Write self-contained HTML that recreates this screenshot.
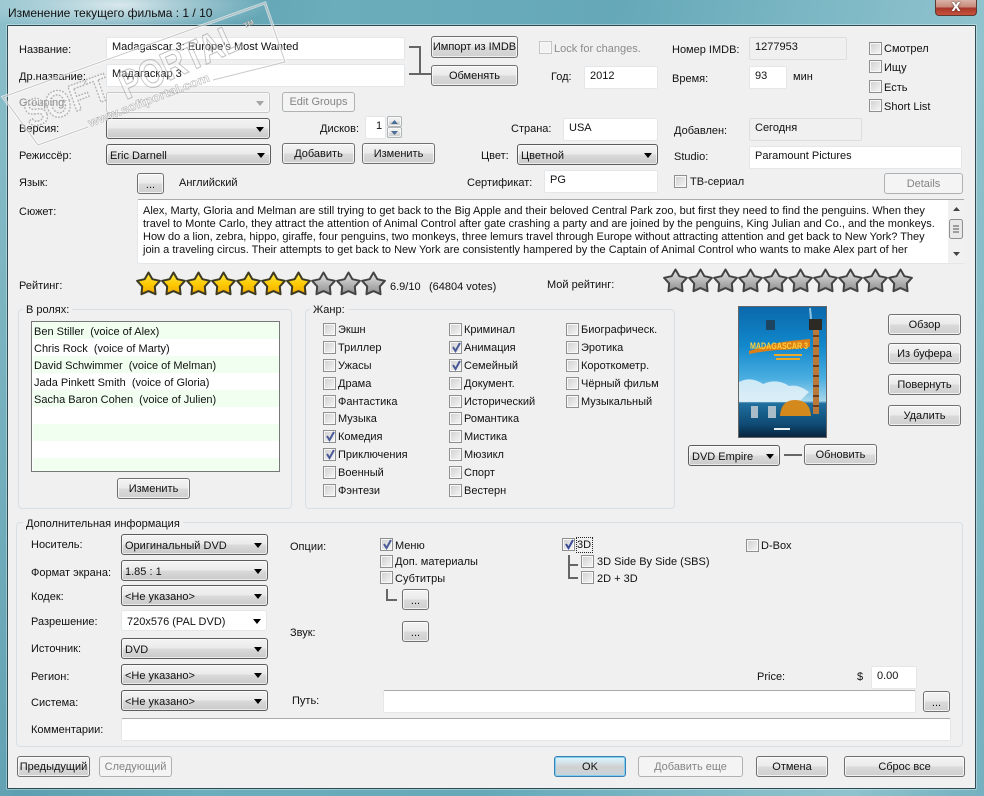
<!DOCTYPE html>
<html lang="ru"><head><meta charset="utf-8"><title>Изменение текущего фильма</title>
<style>
html,body{margin:0;padding:0;width:984px;height:796px;overflow:hidden;background:#6fb0bd}
*{box-sizing:border-box}
body{font:11px/14px "Liberation Sans","Noto Sans CJK SC",sans-serif;color:#111;position:relative}
#fr{position:absolute;inset:0;background:linear-gradient(100deg,#8cc0cb 0,#5d9fb0 14%,#6cadbb 30%,#65a8b8 55%,#7fb9c6 75%,#8fc3cd 88%,#74b0bf 100%)}
#gl{position:absolute;left:-30px;top:-25px;width:300px;height:60px;background:radial-gradient(closest-side,rgba(255,255,255,.75),rgba(255,255,255,0))}
#cl{position:absolute;left:7px;top:25px;width:969px;height:764px;background:#f0f0f0;border:1px solid #2b4a52;border-radius:1px;box-shadow:0 0 0 1px rgba(255,255,255,.35)}
#x{position:absolute;left:935px;top:0;width:42px;height:16px;border:1px solid #5b3a34;border-top:0;border-radius:0 0 4px 4px;background:linear-gradient(#d9b3a8 0,#c98a7a 45%,#a8382a 55%,#c8523e 100%);color:#fff;font:bold 12px/15px "DejaVu Sans",sans-serif;text-align:center;text-shadow:0 0 2px #333}
.t,.b,.c,.i,.k,.g,.l{position:absolute}
.t{white-space:nowrap;height:14px;margin-top:1px}
.p{margin-top:2px}
.d{color:#8b8b8b}
.b{display:flex;align-items:center;justify-content:center;white-space:nowrap;border:1px solid #707070;border-radius:3px;background:linear-gradient(#f3f3f3 0,#ebebeb 48%,#dadada 52%,#cfcfcf 100%);box-shadow:inset 0 0 0 1px rgba(255,255,255,.7)}
.b.n{border-color:#aeb2b5;background:#f4f4f4;color:#848484;box-shadow:none}
.b.o{border-color:#3c7fb1;background:linear-gradient(#eaf6fd 0,#d9f0fc 10%,#d0d0d0 52%,#c8d4dc 100%);box-shadow:inset 0 0 0 1px #7fd0f0}
.c{border:1px solid #5c5c5c;border-radius:3px;background:linear-gradient(#f3f3f3 0,#ebebeb 48%,#dadada 52%,#c9c9c9 100%);padding:4px 0 0 3px;white-space:nowrap;box-shadow:inset 0 0 0 1px rgba(255,255,255,.6)}
.c:after{content:"";position:absolute;right:5px;top:8px;border:4px solid transparent;border-top:5px solid #000;border-bottom:0}
.c.n{border-color:#c4c8ca;background:#f1f1f1}.c.n:after{border-top-color:#a5a5a5}
.c.w{background:#fff;border-color:#e3e7ea;box-shadow:none}
.i{background:#fff;border:1px solid #e4e7ea;border-radius:2px;padding:2px 0 0 5px;white-space:nowrap}
.i.y{background:#f0f0f0;border-color:#dcdfe1;padding-left:5px}
.i.s{border-top-color:#ababab}
.k{width:13px;height:13px;border:1px solid #8e8f8f;background:linear-gradient(135deg,#cfcfcf,#f6f6f6);box-shadow:inset 0 0 0 1px #f8f8f8}
.k.n{border-color:#c5c5c5;background:#f2f2f2}
.k svg{position:absolute;left:1px;top:0}
.g{border:1px solid #d8e0e6;border-radius:4px}
.l{background:#f0f0f0;padding:0 3px;white-space:nowrap;height:14px;margin-top:1px}
.r{position:absolute;left:1px;width:246px;height:17px;background:#f0fff0}
.r.w{background:#fff}
.r span{position:absolute;left:1px;top:3px;white-space:pre}
.h{position:absolute;background:#666}
svg.a{position:absolute;overflow:visible}
</style></head><body>
<div id="fr"></div><div id="gl"></div>
<div id="cl"></div>
<div class="t" style="left:8px;top:5px;font-size:12px">Изменение текущего фильма : 1 / 10</div>
<div id="x">X</div>

<div class="t" style="left:19px;top:42px">Название:</div>
<div class="i" style="left:106px;top:37px;width:299px;height:23px">Madagascar 3: Europe's Most Wanted</div>
<div class="t" style="left:19px;top:69px">Др.название:</div>
<div class="i" style="left:106px;top:64px;width:299px;height:23px">Мадагаскар 3</div>
<div class="t d" style="left:19px;top:95px">Grouping:</div>
<div class="c n" style="left:106px;top:92px;width:164px;height:21px"></div>
<div class="b n" style="left:282px;top:92px;width:73px;height:20px">Edit Groups</div>
<div class="t" style="left:19px;top:121px">Версия:</div>
<div class="c" style="left:106px;top:118px;width:164px;height:21px"></div>
<div class="t" style="left:19px;top:148px">Режиссёр:</div>
<div class="c" style="left:106px;top:144px;width:165px;height:21px">Eric Darnell</div>
<div class="b" style="left:282px;top:143px;width:73px;height:21px">Добавить</div>
<div class="b" style="left:362px;top:143px;width:73px;height:21px">Изменить</div>
<div class="t" style="left:320px;top:121px">Дисков:</div>
<div class="i" style="left:365px;top:116px;width:21px;height:23px;padding-left:10px">1</div>
<div class="b" style="left:387px;top:116px;width:15px;height:11px;border-color:#b0b5b8;border-radius:2px"><svg width="7" height="4"><path d="M0 4L3.5 0L7 4Z" fill="#4a6f96"/></svg></div>
<div class="b" style="left:387px;top:127px;width:15px;height:11px;border-color:#b0b5b8;border-radius:2px"><svg width="7" height="4"><path d="M0 0L3.5 4L7 0Z" fill="#4a6f96"/></svg></div>
<div class="t" style="left:19px;top:175px">Язык:</div>
<div class="b" style="left:137px;top:173px;width:27px;height:21px;padding-top:3px">...</div>
<div class="t" style="left:179px;top:175px">Английский</div>

<div class="b" style="left:431px;top:36px;width:87px;height:22px">Импорт из IMDB</div>
<div class="b" style="left:431px;top:65px;width:87px;height:21px">Обменять</div>
<div class="h" style="left:409px;top:46px;width:12px;height:2px"></div>
<div class="h" style="left:419px;top:46px;width:2px;height:29px"></div>
<div class="h" style="left:409px;top:73px;width:22px;height:2px"></div>

<div class="k n" style="left:539px;top:41px"></div>
<div class="t d" style="left:554px;top:41px">Lock for changes.</div>
<div class="t" style="left:551px;top:69px">Год:</div>
<div class="i" style="left:584px;top:66px;width:74px;height:23px">2012</div>
<div class="t" style="left:672px;top:42px">Номер IMDB:</div>
<div class="i y" style="left:749px;top:37px;width:98px;height:23px">1277953</div>
<div class="t" style="left:672px;top:71px">Время:</div>
<div class="i" style="left:749px;top:66px;width:38px;height:23px">93</div>
<div class="t" style="left:793px;top:69px">мин</div>
<div class="k" style="left:869px;top:42px"></div><div class="t" style="left:884px;top:41px">Смотрел</div>
<div class="k" style="left:869px;top:60px"></div><div class="t" style="left:884px;top:60px">Ищу</div>
<div class="k" style="left:869px;top:80px"></div><div class="t" style="left:884px;top:80px">Есть</div>
<div class="k" style="left:869px;top:99px"></div><div class="t" style="left:884px;top:99px">Short List</div>

<div class="t" style="left:511px;top:121px">Страна:</div>
<div class="i" style="left:563px;top:118px;width:95px;height:23px">USA</div>
<div class="t" style="left:674px;top:123px">Добавлен:</div>
<div class="i y" style="left:749px;top:118px;width:113px;height:23px">Сегодня</div>
<div class="t" style="left:481px;top:148px">Цвет:</div>
<div class="c" style="left:517px;top:144px;width:141px;height:21px">Цветной</div>
<div class="t" style="left:674px;top:149px">Studio:</div>
<div class="i" style="left:749px;top:146px;width:213px;height:23px">Paramount Pictures</div>
<div class="t" style="left:467px;top:175px">Сертификат:</div>
<div class="i" style="left:544px;top:170px;width:114px;height:23px">PG</div>
<div class="k" style="left:674px;top:175px"></div><div class="t" style="left:690px;top:174px">ТВ-сериал</div>
<div class="b n" style="left:884px;top:173px;width:79px;height:21px">Details</div>

<div class="t" style="left:19px;top:204px">Сюжет:</div>
<div class="i s" style="left:137px;top:199px;width:828px;height:65px;padding:0"></div>
<div class="t p" style="left:143px;top:202px">Alex, Marty, Gloria and Melman are still trying to get back to the Big Apple and their beloved Central Park zoo, but first they need to find the penguins. When they</div>
<div class="t p" style="left:143px;top:215px">travel to Monte Carlo, they attract the attention of Animal Control after gate crashing a party and are joined by the penguins, King Julian and Co., and the monkeys.</div>
<div class="t p" style="left:143px;top:228px">How do a lion, zebra, hippo, giraffe, four penguins, two monkeys, three lemurs travel through Europe without attracting attention and get back to New York? They</div>
<div class="t p" style="left:143px;top:241px">join a traveling circus. Their attempts to get back to New York are consistently hampered by the Captain of Animal Control who wants to make Alex part of her</div>
<svg class="a" style="left:948px;top:200px" width="17" height="63"><rect width="17" height="63" fill="#f1f1f1"/><path d="M5 11L8.500 7L12 11Z" fill="#444"/><path d="M5 52L8.500 56L12 52Z" fill="#444"/><rect x="1.500" y="19.500" width="13" height="19" rx="2" fill="#e8e8e8" stroke="#8e8f8f"/><path d="M5 26h6M5 29h6M5 32h6" stroke="#555"/></svg>

<svg width="0" height="0" style="position:absolute"><defs>
<linearGradient id="yg" x1="0" y1="0" x2="0" y2="1"><stop offset="0" stop-color="#ffe94a"/><stop offset=".55" stop-color="#fdc900"/><stop offset="1" stop-color="#f0a800"/></linearGradient>
<linearGradient id="gg" x1="0" y1="0" x2="0" y2="1"><stop offset="0" stop-color="#e8e8e8"/><stop offset=".55" stop-color="#b5b5b5"/><stop offset="1" stop-color="#8f8f8f"/></linearGradient>
<path id="st" d="M12.500 1.500L16.400 8.200L23.900 9.800L18.800 15.500L19.550 23.200L12.500 20.100L5.450 23.200L6.200 15.500L1.100 9.800L8.600 8.200Z" stroke-linejoin="round" stroke-width="2"/>
</defs></svg>
<div class="t" style="left:19px;top:278px">Рейтинг:</div>
<svg class="a" style="left:136px;top:271px" width="250" height="26">
<use href="#st" x="0" fill="url(#yg)" stroke="#3d3a22"/><use href="#st" x="25" fill="url(#yg)" stroke="#3d3a22"/><use href="#st" x="50" fill="url(#yg)" stroke="#3d3a22"/><use href="#st" x="75" fill="url(#yg)" stroke="#3d3a22"/><use href="#st" x="100" fill="url(#yg)" stroke="#3d3a22"/><use href="#st" x="125" fill="url(#yg)" stroke="#3d3a22"/><use href="#st" x="150" fill="url(#yg)" stroke="#3d3a22"/>
<use href="#st" x="175" fill="url(#gg)" stroke="#444"/><use href="#st" x="200" fill="url(#gg)" stroke="#444"/><use href="#st" x="225" fill="url(#gg)" stroke="#444"/></svg>
<div class="t" style="left:390px;top:279px">6.9/10</div><div class="t" style="left:429px;top:279px">(64804 votes)</div>
<div class="t" style="left:547px;top:277px">Мой рейтинг:</div>
<svg class="a" style="left:663px;top:268px" width="250" height="26">
<use href="#st" x="0" fill="url(#gg)" stroke="#444"/><use href="#st" x="25" fill="url(#gg)" stroke="#444"/><use href="#st" x="50" fill="url(#gg)" stroke="#444"/><use href="#st" x="75" fill="url(#gg)" stroke="#444"/><use href="#st" x="100" fill="url(#gg)" stroke="#444"/><use href="#st" x="125" fill="url(#gg)" stroke="#444"/><use href="#st" x="150" fill="url(#gg)" stroke="#444"/><use href="#st" x="175" fill="url(#gg)" stroke="#444"/><use href="#st" x="200" fill="url(#gg)" stroke="#444"/><use href="#st" x="225" fill="url(#gg)" stroke="#444"/></svg>

<div class="g" style="left:18px;top:309px;width:274px;height:200px"></div>
<div class="l" style="left:23px;top:302px">В ролях:</div>
<div style="position:absolute;left:31px;top:321px;width:249px;height:151px;background:#fff;border:1px solid #777;overflow:hidden">
<div class="r" style="top:0"><span>Ben Stiller  (voice of Alex)</span></div>
<div class="r w" style="top:17px"><span>Chris Rock  (voice of Marty)</span></div>
<div class="r" style="top:34px"><span>David Schwimmer  (voice of Melman)</span></div>
<div class="r w" style="top:51px"><span>Jada Pinkett Smith  (voice of Gloria)</span></div>
<div class="r" style="top:68px"><span>Sacha Baron Cohen  (voice of Julien)</span></div>
<div class="r w" style="top:85px"></div><div class="r" style="top:102px"></div><div class="r w" style="top:119px"></div><div class="r" style="top:136px"></div>
</div>
<div class="b" style="left:117px;top:478px;width:73px;height:21px">Изменить</div>

<div class="g" style="left:305px;top:309px;width:370px;height:200px"></div>
<div class="l" style="left:310px;top:302px">Жанр:</div>
<div class="k" style="left:323px;top:323px"></div><div class="t" style="left:338px;top:322px">Экшн</div>
<div class="k" style="left:323px;top:341px"></div><div class="t" style="left:338px;top:340px">Триллер</div>
<div class="k" style="left:323px;top:359px"></div><div class="t" style="left:338px;top:358px">Ужасы</div>
<div class="k" style="left:323px;top:377px"></div><div class="t" style="left:338px;top:376px">Драма</div>
<div class="k" style="left:323px;top:395px"></div><div class="t" style="left:338px;top:394px">Фантастика</div>
<div class="k" style="left:323px;top:412px"></div><div class="t" style="left:338px;top:411px">Музыка</div>
<div class="k" style="left:323px;top:430px"><svg width="11" height="11"><path d="M2 5L4.500 9L9 1" fill="none" stroke="#4a5a98" stroke-width="2"/></svg></div><div class="t" style="left:338px;top:429px">Комедия</div>
<div class="k" style="left:323px;top:448px"><svg width="11" height="11"><path d="M2 5L4.500 9L9 1" fill="none" stroke="#4a5a98" stroke-width="2"/></svg></div><div class="t" style="left:338px;top:447px">Приключения</div>
<div class="k" style="left:323px;top:466px"></div><div class="t" style="left:338px;top:465px">Военный</div>
<div class="k" style="left:323px;top:484px"></div><div class="t" style="left:338px;top:483px">Фэнтези</div>

<div class="k" style="left:449px;top:323px"></div><div class="t" style="left:464px;top:322px">Криминал</div>
<div class="k" style="left:449px;top:341px"><svg width="11" height="11"><path d="M2 5L4.500 9L9 1" fill="none" stroke="#4a5a98" stroke-width="2"/></svg></div><div class="t" style="left:464px;top:340px">Анимация</div>
<div class="k" style="left:449px;top:359px"><svg width="11" height="11"><path d="M2 5L4.500 9L9 1" fill="none" stroke="#4a5a98" stroke-width="2"/></svg></div><div class="t" style="left:464px;top:358px">Семейный</div>
<div class="k" style="left:449px;top:377px"></div><div class="t" style="left:464px;top:376px">Документ.</div>
<div class="k" style="left:449px;top:395px"></div><div class="t" style="left:464px;top:394px">Исторический</div>
<div class="k" style="left:449px;top:412px"></div><div class="t" style="left:464px;top:411px">Романтика</div>
<div class="k" style="left:449px;top:430px"></div><div class="t" style="left:464px;top:429px">Мистика</div>
<div class="k" style="left:449px;top:448px"></div><div class="t" style="left:464px;top:447px">Мюзикл</div>
<div class="k" style="left:449px;top:466px"></div><div class="t" style="left:464px;top:465px">Спорт</div>
<div class="k" style="left:449px;top:484px"></div><div class="t" style="left:464px;top:483px">Вестерн</div>

<div class="k" style="left:566px;top:323px"></div><div class="t" style="left:581px;top:322px">Биографическ.</div>
<div class="k" style="left:566px;top:341px"></div><div class="t" style="left:581px;top:340px">Эротика</div>
<div class="k" style="left:566px;top:359px"></div><div class="t" style="left:581px;top:358px">Короткометр.</div>
<div class="k" style="left:566px;top:377px"></div><div class="t" style="left:581px;top:376px">Чёрный фильм</div>
<div class="k" style="left:566px;top:395px"></div><div class="t" style="left:581px;top:394px">Музыкальный</div>

<svg class="a" style="left:738px;top:306px" width="90" height="132" viewBox="0 0 90 132">
<defs><linearGradient id="sky" x1="0" y1="0" x2="0" y2="1"><stop offset="0" stop-color="#0a68ab"/><stop offset=".3" stop-color="#1288cc"/><stop offset=".55" stop-color="#4aaee0"/><stop offset=".72" stop-color="#a6d6ea"/><stop offset=".74" stop-color="#1f6f9e"/><stop offset=".9" stop-color="#0f4a74"/><stop offset="1" stop-color="#08233b"/></linearGradient></defs>
<rect x=".5" y=".5" width="88" height="131" fill="url(#sky)" stroke="#666"/>
<path d="M1 76q12-6 24 2q14-6 26 2q10-2 20 6l-10 10H1Z" fill="#e4f2f9" opacity=".85"/>
<path d="M42 110q1-16 15-16q15 0 16 16Z" fill="#d4891c"/>
<rect x="75" y="22" width="6" height="86" fill="#b9793a"/>
<path d="M75 30h6M75 40h6M75 50h6M75 60h6M75 70h6M75 80h6M75 90h6M75 100h6" stroke="#6a3d1c" stroke-width="2"/>
<path d="M71 13h13v11H71Z" fill="#2b2a24"/><path d="M72 2l1 11" stroke="#8fc4e0" stroke-width="2"/>
<path d="M28 14h9v10h-9Z" fill="#1b4560"/>
<path d="M11 45q26-8 34-9q14-2 27-3v8q-20 3-32 3q-14 1-29 4Z" fill="#dc7f16"/>
<text x="41" y="43" font-family="Liberation Sans,sans-serif" font-size="9" font-weight="bold" fill="#ffd23c" text-anchor="middle" textLength="58" lengthAdjust="spacingAndGlyphs">MADAGASCAR 3</text>
<path d="M36 49h28M38 53h24" stroke="#f0a828" stroke-width="2"/>
<path d="M13 100h7v12h-7ZM30 100h8v12h-8Z" fill="#a9bcc8"/>
<path d="M36 123h16" stroke="#e8eef2" stroke-width="2"/>
</svg>
<div class="b" style="left:888px;top:314px;width:73px;height:21px">Обзор</div>
<div class="b" style="left:888px;top:343px;width:73px;height:21px">Из буфера</div>
<div class="b" style="left:888px;top:374px;width:73px;height:21px">Повернуть</div>
<div class="b" style="left:888px;top:405px;width:73px;height:21px">Удалить</div>
<div class="c" style="left:688px;top:445px;width:92px;height:21px">DVD Empire</div>
<div class="h" style="left:784px;top:454px;width:18px;height:2px"></div>
<div class="b" style="left:804px;top:444px;width:73px;height:21px">Обновить</div>

<div class="g" style="left:16px;top:522px;width:947px;height:225px"></div>
<div class="l" style="left:23px;top:516px">Дополнительная информация</div>
<div class="t" style="left:31px;top:537px">Носитель:</div>
<div class="c" style="left:121px;top:534px;width:147px;height:21px">Оригинальный DVD</div>
<div class="t" style="left:31px;top:565px">Формат экрана:</div>
<div class="c" style="left:121px;top:560px;width:147px;height:21px">1.85 : 1</div>
<div class="t" style="left:31px;top:589px">Кодек:</div>
<div class="c" style="left:121px;top:585px;width:147px;height:21px">&lt;Не указано&gt;</div>
<div class="t" style="left:31px;top:614px">Разрешение:</div>
<div class="c w" style="left:121px;top:610px;width:146px;height:21px;padding-left:5px">720x576 (PAL DVD)</div>
<div class="t" style="left:31px;top:641px">Источник:</div>
<div class="c" style="left:121px;top:638px;width:147px;height:21px">DVD</div>
<div class="t" style="left:31px;top:669px">Регион:</div>
<div class="c" style="left:121px;top:664px;width:147px;height:21px">&lt;Не указано&gt;</div>
<div class="t" style="left:31px;top:695px">Система:</div>
<div class="c" style="left:121px;top:690px;width:147px;height:21px">&lt;Не указано&gt;</div>
<div class="t" style="left:31px;top:722px">Комментарии:</div>
<div class="i s" style="left:121px;top:718px;width:830px;height:23px"></div>

<div class="t" style="left:290px;top:539px">Опции:</div>
<div class="t" style="left:290px;top:625px">Звук:</div>
<div class="t" style="left:292px;top:693px">Путь:</div>
<div class="i s" style="left:383px;top:690px;width:533px;height:23px"></div>
<div class="b" style="left:923px;top:691px;width:27px;height:21px;padding-top:3px">...</div>
<div class="k" style="left:380px;top:538px"><svg width="11" height="11"><path d="M2 5L4.500 9L9 1" fill="none" stroke="#4a5a98" stroke-width="2"/></svg></div><div class="t" style="left:395px;top:538px">Меню</div>
<div class="k" style="left:380px;top:555px"></div><div class="t" style="left:395px;top:554px">Доп. материалы</div>
<div class="k" style="left:380px;top:571px"></div><div class="t" style="left:395px;top:571px">Субтитры</div>
<div class="h" style="left:386px;top:589px;width:2px;height:11px"></div><div class="h" style="left:386px;top:599px;width:11px;height:2px"></div>
<div class="b" style="left:402px;top:589px;width:27px;height:21px;padding-top:3px">...</div>
<div class="b" style="left:402px;top:621px;width:27px;height:21px;padding-top:3px">...</div>

<div class="k" style="left:562px;top:538px"><svg width="11" height="11"><path d="M2 5L4.500 9L9 1" fill="none" stroke="#3a4a98" stroke-width="2"/></svg></div>
<div class="t" style="left:577px;top:537px;width:15px;outline:1px dotted #222;outline-offset:0">3D</div>
<div class="h" style="left:568px;top:555px;width:2px;height:24px"></div><div class="h" style="left:568px;top:564px;width:10px;height:2px"></div><div class="h" style="left:568px;top:577px;width:10px;height:2px"></div>
<div class="k" style="left:581px;top:555px"></div><div class="t" style="left:597px;top:554px">3D Side By Side (SBS)</div>
<div class="k" style="left:581px;top:571px"></div><div class="t" style="left:597px;top:571px">2D + 3D</div>
<div class="k" style="left:746px;top:539px"></div><div class="t" style="left:761px;top:538px">D-Box</div>
<div class="t" style="left:757px;top:669px">Price:</div>
<div class="t" style="left:857px;top:669px">$</div>
<div class="i" style="left:871px;top:666px;width:46px;height:23px">0.00</div>

<div class="b" style="left:17px;top:756px;width:73px;height:21px">Предыдущий</div>
<div class="b n" style="left:99px;top:756px;width:73px;height:21px">Следующий</div>
<div class="b o" style="left:554px;top:756px;width:72px;height:21px">OK</div>
<div class="b n" style="left:638px;top:756px;width:105px;height:21px">Добавить еще</div>
<div class="b" style="left:756px;top:756px;width:72px;height:21px">Отмена</div>
<div class="b" style="left:844px;top:756px;width:121px;height:21px">Сброс все</div>

<svg class="a" style="left:0;top:0" width="300" height="170" font-family="Liberation Sans,sans-serif">
<path d="M88 127L38 145L3 97L265 3L285 62L213 80" fill="none" stroke="#fff" stroke-opacity=".6" stroke-width="3"/>
<path d="M88 127L38 145L3 97L265 3L285 62L213 80" fill="none" stroke="#888" stroke-opacity=".45" stroke-width="1"/>
<text transform="translate(30 128) rotate(-20)" font-size="38" font-weight="bold" fill="#fff" fill-opacity=".25" stroke="#8a8a8a" stroke-opacity=".6" stroke-width="1.500" stroke-dasharray="2 1.500" textLength="88" lengthAdjust="spacingAndGlyphs">SOFT</text>
<text transform="translate(126 100) rotate(-24)" font-size="40" font-weight="bold" fill="#fff" fill-opacity=".3" stroke="#8a8a8a" stroke-opacity=".55" stroke-width="1" textLength="130" lengthAdjust="spacingAndGlyphs">PORTAL</text>
<text transform="translate(245 28) rotate(-24)" font-size="7" font-weight="bold" fill="#fff" stroke="#888" stroke-width=".4">TM</text>
<text transform="translate(90 127) rotate(-21)" font-size="12" font-weight="bold" fill="#fff" fill-opacity=".7" stroke="#777" stroke-opacity=".55" stroke-width=".5" textLength="129" lengthAdjust="spacingAndGlyphs">www.softportal.com</text>
</svg>
</body></html>
